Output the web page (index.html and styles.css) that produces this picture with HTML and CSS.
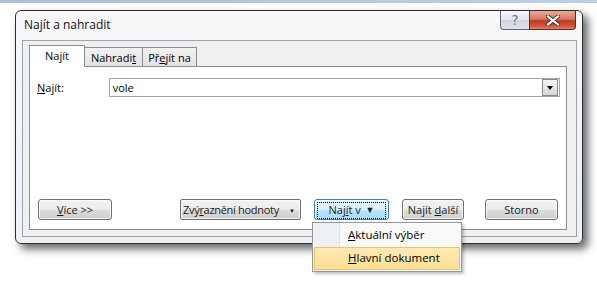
FILE: index.html
```html
<!DOCTYPE html>
<html lang="cs">
<head>
  <meta charset="UTF-8" />
  <title>Najít a nahradit</title>
  <link rel="stylesheet" href="styles.css">
</head>
<body>
  <div class="topbar"></div>
  <div class="window">
    <div class="titlebar">
      <span class="title">Najít a nahradit</span>
      <div class="caption">
        <span class="cap help">?</span>
        <span class="cap close">
          <svg width="14" height="11" viewBox="0 0 14 11">
            <path d="M2 1.5 L12 9.5 M12 1.5 L2 9.5" stroke="#4a2a22" stroke-width="4" stroke-linecap="square"/>
            <path d="M2 1.5 L12 9.5 M12 1.5 L2 9.5" stroke="#fff" stroke-width="2.2" stroke-linecap="square"/>
          </svg>
        </span>
      </div>
    </div>
    <div class="client">
      <div class="tabs">
        <span class="tab active">Na<u>j</u>ít</span>
        <span class="tab">Nahradi<u>t</u></span>
        <span class="tab">Př<u>e</u>jít na</span>
      </div>
      <div class="panel">
        <div class="find-row">
          <span class="label"><u>N</u>ajít:</span>
          <div class="combo">
            <span class="combo-text">vole</span>
            <span class="combo-drop"></span>
          </div>
        </div>
        <div class="buttons">
          <button class="btn more"><u>V</u>íce &gt;&gt;</button>
          <button class="btn highlight">Zvý<u>r</u>aznění hodnoty<span class="arrow small">&#9660;</span></button>
          <div class="find-in-wrap">
            <button class="btn find-in"><span class="focus">Naj<u>í</u>t v <span class="arrow">&#9660;</span></span></button>
            <div class="menu">
              <div class="menu-item"><u>A</u>ktuální výběr</div>
              <div class="menu-item hover"><u>H</u>lavní dokument</div>
            </div>
          </div>
          <button class="btn next">Najít <u>d</u>alší</button>
          <button class="btn cancel">Storno</button>
        </div>
      </div>
    </div>
  </div>
</body>
</html>
```

FILE: styles.css
```css
html, body {
  min-height: 284px;
}

body {
  margin: 0;
  background: white;
  font-family: 'Open Sans', 'Noto Sans', sans-serif;
  font-size: 11px;
  color: #000;
}

u {
  text-decoration-thickness: 1px;
  text-underline-offset: 1px;
}

.topbar {
  height: 3px;
  background: linear-gradient(to right, #a9c0dc, #bcd0e8);
}

.window {
  margin: 7px 0 0 15px;
  width: 555px;
  height: 232px;
  border: 1px solid #2e2e2e;
  border-radius: 6px;
  background: linear-gradient(to bottom, #f7f8fa, #eef1f4);
  box-shadow: 5px 5px 9px rgba(0, 0, 0, 0.6);
  padding: 0 5px 0 6px;
  display: flex;
  flex-direction: column;
}

.titlebar {
  height: 29px;
  display: flex;
  justify-content: space-between;
  align-items: flex-start;
}

.title {
  font-size: 12px;
  margin: 5px 0 0 2px;
  color: #111;
}

.caption {
  display: flex;
  margin-right: 1px;
}

.cap {
  height: 18px;
  display: flex;
  align-items: center;
  justify-content: center;
  border: 1px solid #5d6670;
  border-top: none;
}

.help {
  width: 28px;
  border-radius: 0 0 0 4px;
  border-right: none;
  background: linear-gradient(to bottom, #f5f7f9 0%, #e3e7ec 50%, #cfd5dc 51%, #dde3e9 100%);
  color: #6a6f75;
  font-size: 14px;
  font-family: 'DejaVu Sans', sans-serif;
  text-shadow: 0 0 1px #fff;
}

.close {
  width: 45px;
  border-radius: 0 0 4px 0;
  border-color: #5c2d24;
  background: linear-gradient(to bottom, #e9a999 0%, #d67a64 45%, #c0391f 55%, #d2593d 85%, #e2866b 100%);
}

.client {
  height: 185px;
  border: 1px solid #9ba3ad;
  background: #f0f0f0;
  padding: 4px 9px 6px 6px;
  display: flex;
  flex-direction: column;
}

.tabs {
  display: flex;
  align-items: flex-end;
  height: 21px;
  position: relative;
  z-index: 1;
}

.tab {
  box-sizing: border-box;
  height: 19px;
  border: 1px solid #898c95;
  border-bottom: none;
  margin-left: -1px;
  background: linear-gradient(to bottom, #f2f2f2, #e3e3e3);
  display: flex;
  align-items: center;
  justify-content: center;
  white-space: nowrap;
}

.tab:nth-child(2) { width: 59px; }
.tab:nth-child(3) { width: 55px; }

.tab.active {
  margin-left: 0;
  width: 56px;
  height: 22px;
  background: white;
  margin-bottom: -1px;
  padding-bottom: 2px;
  z-index: 2;
}

.panel {
  flex: 1;
  background: white;
  border: 1px solid #898c95;
  padding: 11px 6px 9px 8px;
  display: flex;
  flex-direction: column;
}

.find-row {
  display: flex;
  align-items: center;
}

.label {
  width: 71px;
  margin-left: -1px;
  margin-right: 1px;
}

.combo {
  width: 448px;
  height: 17px;
  border: 1px solid #a5a5a5;
  display: flex;
  justify-content: space-between;
  align-items: center;
  padding-left: 3px;
}

.combo-drop {
  width: 14px;
  height: 15px;
  margin-right: 1px;
  border: 1px solid #8a8a8a;
  background: linear-gradient(to bottom, #f4f4f4, #d6d6d6);
  position: relative;
}

.combo-drop::after {
  content: "";
  position: absolute;
  left: 4px;
  top: 6px;
  border-left: 3px solid transparent;
  border-right: 3px solid transparent;
  border-top: 4px solid #000;
}

.buttons {
  margin-top: auto;
  display: flex;
  align-items: center;
}

.btn {
  font-family: inherit;
  font-size: 11px;
  height: 21px;
  padding: 0;
  border: 1px solid #707070;
  border-radius: 3px;
  background: linear-gradient(to bottom, #f2f2f2 0%, #ebebeb 50%, #dddddd 51%, #cfcfcf 100%);
  color: #1a1a1a;
  box-shadow: inset 0 0 0 1px rgba(255, 255, 255, 0.7);
  white-space: nowrap;
}

.more { width: 74px; }

.highlight {
  width: 121px;
  margin-left: 68px;
  text-align: left;
  padding-left: 2px;
  letter-spacing: -0.3px;
  border-color: #6f6f6f;
  border-radius: 2px;
}

.arrow {
  font-size: 9px;
  vertical-align: 1px;
  margin-left: 2px;
}

.arrow.small {
  margin-left: 10px;
  font-size: 6px;
}

.find-in-wrap {
  position: relative;
  margin-left: 13px;
}

.find-in {
  display: block;
  width: 75px;
  border-color: #3c7fb1;
  background: linear-gradient(to bottom, #eaf6fd 0%, #d9f0fc 50%, #bee6fd 51%, #a7d9f5 100%);
  padding: 2px;
}

.focus {
  display: block;
  height: 15px;
  line-height: 14px;
  border: 1px dotted #000;
  text-align: center;
}

.next {
  width: 62px;
  margin-left: 13px;
}

.cancel {
  width: 73px;
  margin-left: 21px;
}

.menu {
  position: absolute;
  top: 23px;
  left: -2px;
  width: 148px;
  border: 1px solid #979797;
  background: linear-gradient(to right, #eef1f4 0, #eef1f4 26px, #e2e3e3 26px, #e2e3e3 27px, #fafafa 27px);
  padding: 1px 0;
  box-shadow: 2px 2px 3px rgba(0, 0, 0, 0.25);
  z-index: 5;
}

.menu-item {
  height: 23px;
  line-height: 22px;
  padding-left: 34px;
  font-size: 11.5px;
  box-sizing: border-box;
  margin: 0 1px;
}

.menu-item.hover {
  background: linear-gradient(to bottom, #fde9b4, #fcdf95);
  border: 1px solid #e9c46a;
  padding-left: 33px;
  line-height: 20px;
}
```
